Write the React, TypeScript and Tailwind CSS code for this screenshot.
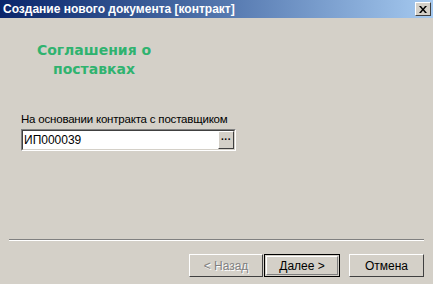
export default function App() {
  return (
    <div
      className="w-[433px] h-[284px] bg-[#d4d0c8] flex flex-col overflow-hidden"
      style={{ fontFamily: '"Liberation Sans", Arial, sans-serif' }}
    >
      {/* Title bar */}
      <div className="h-[18px] flex items-center justify-between bg-gradient-to-r from-[#0a246a] to-[#a6caf0] pl-[3px] pr-[2px]">
        <span className="text-white font-bold text-[12px] leading-none">
          Создание нового документа [контракт]
        </span>
        <div className="w-[16px] h-[14px] bg-[#d4d0c8] border border-t-white border-l-white border-r-[#404040] border-b-[#404040] flex items-center justify-center">
          <svg width="8" height="7" viewBox="0 0 8 7">
            <path d="M0 0h2l2 2.5L6 0h2L5 3.5 8 7H6L4 4.5 2 7H0l3-3.5z" fill="#000" />
          </svg>
        </div>
      </div>

      {/* Body */}
      <div className="flex-1 flex flex-col px-[21px]">
        <div className="w-[146px] mt-[23px] text-center text-[#2fb36f] font-bold text-[14px] leading-[19px]" style={{ fontFamily: '"DejaVu Sans", sans-serif' }}>
          Соглашения о<br />поставках
        </div>

        <div className="mt-[33px] text-[11.5px] leading-[15px] text-black tracking-[-0.2px]">На основании контракта с поставщиком</div>
        <div className="mt-[2px] w-[215px] h-[22px] flex bg-white border border-t-[#808080] border-l-[#808080] border-r-white border-b-white">
          <div className="flex-1 flex border border-t-[#404040] border-l-[#404040] border-r-[#d4d0c8] border-b-[#d4d0c8]">
            <span className="flex-1 pl-[1px] text-[12px] leading-[18px] text-black">ИП000039</span>
            <div className="w-[16px] bg-[#d4d0c8] border border-t-white border-l-white border-r-[#404040] border-b-[#404040] flex items-center justify-center text-[10px] font-bold leading-none">
              ···
            </div>
          </div>
        </div>
      </div>

      {/* Separator */}
      <div className="mx-[9px] w-[415px] border-t border-t-[#808080] border-b border-b-white" />

      {/* Buttons */}
      <div className="h-[43px] flex items-start justify-end pr-[9px] pt-[13px]">
        <button className="w-[74px] h-[23px] bg-[#d4d0c8] border border-t-white border-l-white border-r-[#404040] border-b-[#404040] text-[12px] text-[#808080]" style={{ textShadow: "1px 1px 0 #fff" }}>
          &lt; Назад
        </button>
        <button className="ml-[1px] w-[76px] h-[23px] bg-[#d4d0c8] border border-black text-[12px] text-black flex items-center justify-center">
          <span className="w-[72px] h-[19px] border border-t-white border-l-white border-r-[#808080] border-b-[#808080] flex items-center justify-center">Далее &gt;</span>
        </button>
        <button className="ml-[9px] w-[75px] h-[23px] bg-[#d4d0c8] border border-t-white border-l-white border-r-[#404040] border-b-[#404040] text-[12px] text-black">
          Отмена
        </button>
      </div>
    </div>
  );
}
